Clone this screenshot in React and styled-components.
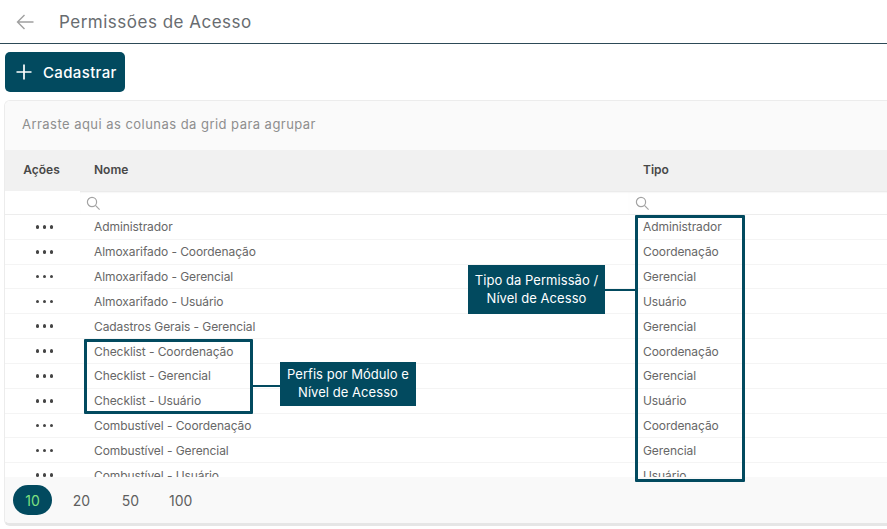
import React from 'react'
import styled, { createGlobalStyle } from 'styled-components'

const rows = [
  ['Administrador', 'Administrador'],
  ['Almoxarifado - Coordenação', 'Coordenação'],
  ['Almoxarifado - Gerencial', 'Gerencial'],
  ['Almoxarifado - Usuário', 'Usuário'],
  ['Cadastros Gerais - Gerencial', 'Gerencial'],
  ['Checklist - Coordenação', 'Coordenação'],
  ['Checklist - Gerencial', 'Gerencial'],
  ['Checklist - Usuário', 'Usuário'],
  ['Combustível - Coordenação', 'Coordenação'],
  ['Combustível - Gerencial', 'Gerencial'],
  ['Combustível - Usuário', 'Usuário'],
]

const pageSizes = [10, 20, 50, 100]

function SearchIcon() {
  return (
    <svg width="15" height="15" viewBox="0 0 15 15" fill="none" stroke="#a3a3a3" strokeWidth="1.2">
      <circle cx="6" cy="6" r="4.6" />
      <path d="M9.4 9.4 L13.6 13.6" />
    </svg>
  )
}

function BackIcon() {
  return (
    <svg width="18" height="16" viewBox="0 0 18 16" fill="none" stroke="#a0a0a0" strokeWidth="1.4">
      <path d="M17.5 8 H1.5 M8.5 1 L1.5 8 L8.5 15" />
    </svg>
  )
}

function PlusIcon() {
  return (
    <svg width="16" height="16" viewBox="0 0 16 16" fill="none" stroke="#ffffff" strokeWidth="1.7">
      <path d="M8 0.5 V15.5 M0.5 8 H15.5" />
    </svg>
  )
}

export default function App() {
  return (
    <Page>
      <GlobalStyle />
      <Header>
        <BackBtn><BackIcon /></BackBtn>
        <Title>Permissões de Acesso</Title>
      </Header>
      <Toolbar>
        <AddButton><PlusIcon />Cadastrar</AddButton>
      </Toolbar>
      <Grid>
        <GroupPanel>Arraste aqui as colunas da grid para agrupar</GroupPanel>
        <HeadRow>
          <ActionsHead>Ações</ActionsHead>
          <NameCell>Nome</NameCell>
          <TypeCell>Tipo</TypeCell>
        </HeadRow>
        <FilterRow>
          <ActionsCell />
          <FilterCell $width="549px"><SearchIcon /></FilterCell>
          <FilterCell $width="auto"><SearchIcon /></FilterCell>
        </FilterRow>
        <Body>
          {rows.map(([name, type]) => (
            <Row key={name}>
              <ActionsCell><Dots><i /><i /><i /></Dots></ActionsCell>
              <NameCell>{name}</NameCell>
              <TypeCell>{type}</TypeCell>
            </Row>
          ))}
        </Body>
        <Pager>
          {pageSizes.map((size, i) => (
            <PageSize key={size} $active={i === 0}>{size}</PageSize>
          ))}
        </Pager>
      </Grid>

      <Highlight $left={84} $top={339} $width={169} $height={75} />
      <Highlight $left={635} $top={215} $width={110} $height={267} />

      <Connector $left={253} $top={385} $width={28} />
      <Callout $left={280} $top={362} $width={136} $height={44}>
        Perfis por Módulo e<br />Nível de Acesso
      </Callout>

      <Connector $left={605} $top={289} $width={31} />
      <Callout $left={468} $top={265} $width={137} $height={49}>
        Tipo da Permissão /<br />Nível de Acesso
      </Callout>
    </Page>
  )
}

const GlobalStyle = createGlobalStyle`
  html, body {
    margin: 0;
    padding: 0;
    background: #fff;
    overflow: hidden;
  }
  * {
    box-sizing: border-box;
  }
`

const Page = styled.div`
  position: relative;
  width: 887px;
  height: 529px;
  overflow: hidden;
  background: #fff;
  font-family: Inter, "Liberation Sans", sans-serif;
  color: #5f5f5f;
`

const Header = styled.div`
  height: 44px;
  display: flex;
  align-items: center;
  border-bottom: 1px solid #2d4a57;
`

const BackBtn = styled.div`
  width: 59px;
  padding-left: 16px;
  display: flex;
  align-items: center;
`

const Title = styled.div`
  font-size: 17px;
  letter-spacing: 0.5px;
  color: #686c70;
`

const Toolbar = styled.div`
  height: 56px;
  padding: 8px 0 0 5px;
`

const AddButton = styled.div`
  width: 120px;
  height: 40px;
  border-radius: 5px;
  background: #024a5f;
  color: #fff;
  font-size: 15px;
  font-weight: 500;
  letter-spacing: 0.35px;
  display: flex;
  align-items: center;
  gap: 11px;
  padding-left: 11px;
`

const Grid = styled.div`
  margin-left: 4px;
  height: 426px;
  display: flex;
  flex-direction: column;
  border: 1px solid #ececec;
  border-bottom: 3px solid #e6e6e6;
  border-right: none;
  border-radius: 6px 0 0 6px;
  overflow: hidden;
`

const GroupPanel = styled.div`
  height: 49px;
  background: #fafafa;
  padding: 0 0 4px 17px;
  display: flex;
  align-items: center;
  font-size: 13px;
  letter-spacing: 0.46px;
  color: #8e8e8e;
`

const HeadRow = styled.div`
  height: 41px;
  background: #f1f1f1;
  display: flex;
  align-items: center;
  padding-bottom: 2px;
  font-size: 12px;
  font-weight: 600;
  color: #484848;
`

const ActionsCell = styled.div`
  width: 75px;
  display: flex;
  justify-content: center;
`

const ActionsHead = styled(ActionsCell)`
  padding-right: 2px;
`

const NameCell = styled.div`
  width: 549px;
  padding-left: 14px;
  white-space: nowrap;
`

const TypeCell = styled.div`
  flex: 1;
  padding-left: 14px;
  white-space: nowrap;
`

const FilterRow = styled.div`
  height: 24px;
  display: flex;
  border-bottom: 1px solid #ededed;
`

const FilterCell = styled.div`
  width: ${p => p.$width};
  flex: ${p => (p.$width === 'auto' ? 1 : 'none')};
  display: flex;
  align-items: center;
  padding: 2px 0 0 6px;
  box-shadow: inset 0 2px 2px -1px #e4e4e4;
`

const Body = styled.div`
  flex: 1;
  overflow: hidden;
  background: #fff;
`

const Row = styled.div`
  height: 24.83px;
  display: flex;
  align-items: center;
  border-bottom: 1px solid #f4f4f4;
  font-size: 12px;
  letter-spacing: -0.08px;
  color: #676767;
`

const Dots = styled.span`
  display: flex;
  gap: 3.4px;
  margin-left: 4px;

  i {
    width: 3.6px;
    height: 3.6px;
    border-radius: 50%;
    background: #444;
  }
`

const Pager = styled.div`
  height: 46px;
  background: #f9f9f9;
  display: flex;
  align-items: center;
  padding-left: 8px;
  font-size: 14px;
  color: #5f5f5f;
`

const PageSize = styled.div`
  height: 30px;
  min-width: 39px;
  padding: 0 9px;
  margin-right: 10px;
  border-radius: 15px;
  display: flex;
  align-items: center;
  justify-content: center;
  background: ${p => (p.$active ? '#024a5f' : 'transparent')};
  color: ${p => (p.$active ? '#7ee081' : '#5f5f5f')};
`

const Highlight = styled.div`
  position: absolute;
  left: ${p => p.$left}px;
  top: ${p => p.$top}px;
  width: ${p => p.$width}px;
  height: ${p => p.$height}px;
  border: 3px solid #024a5f;
  border-radius: 1px;
`

const Connector = styled.div`
  position: absolute;
  left: ${p => p.$left}px;
  top: ${p => p.$top}px;
  width: ${p => p.$width}px;
  height: 2px;
  background: #024a5f;
`

const Callout = styled.div`
  position: absolute;
  left: ${p => p.$left}px;
  top: ${p => p.$top}px;
  width: ${p => p.$width}px;
  height: ${p => p.$height}px;
  padding-bottom: 2px;
  background: #024a5f;
  color: #fff;
  font-size: 13px;
  line-height: 18px;
  letter-spacing: 0.05px;
  text-align: center;
  display: flex;
  align-items: center;
  justify-content: center;
`
